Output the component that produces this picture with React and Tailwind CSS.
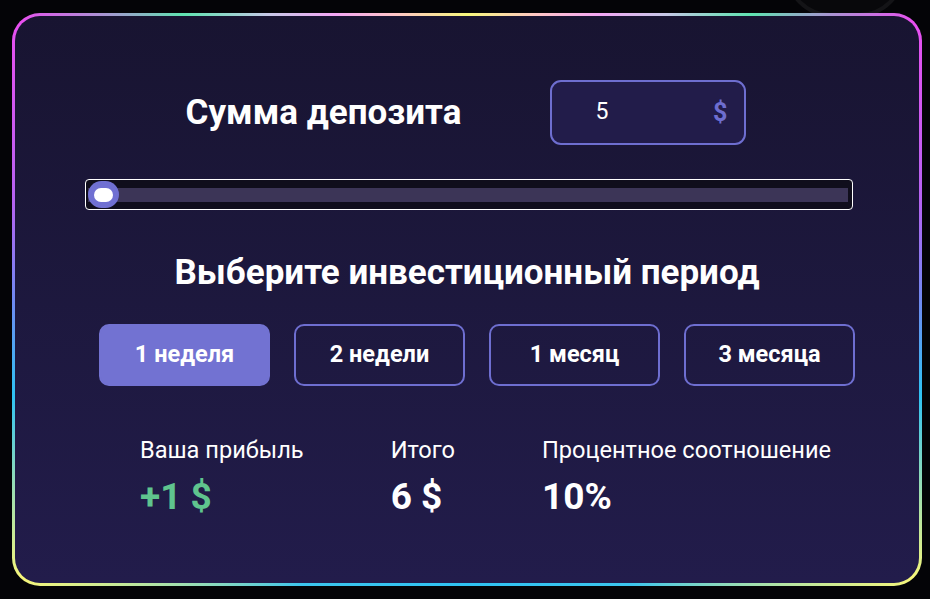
import { useState } from "react";

const PERIODS = ["1 неделя", "2 недели", "1 месяц", "3 месяца"];

const STATS = [
  { label: "Ваша прибыль", value: "+1 $", green: true },
  { label: "Итого", value: "6 $" },
  { label: "Процентное соотношение", value: "10%" },
];

export default function App() {
  const [period, setPeriod] = useState(0);

  return (
    <div className="relative h-[599px] w-[930px] overflow-hidden bg-[#040407] pl-[12px] pt-[13px] font-['Roboto',sans-serif] text-white">
      <div className="absolute right-[25px] top-[-75px] h-[92px] w-[120px] rounded-full border-[4px] border-[#141417] bg-[#08080b]" />
      <div className="relative w-[910px] h-[573px] rounded-[28px] p-[3px] bg-[conic-gradient(from_0deg,#f6f77c_0deg,#ffc6c6_14deg,#f3a6f4_25deg,#c6c8e6_35deg,#5fe3b0_45deg,#e94ff0_58deg,#b463f1_78deg,#7089f2_90deg,#2fc2f3_102deg,#f7f67a_122deg,#3cc5ee_150deg,#2fc2f3_180deg,#3cc5ee_210deg,#f7f67a_238deg,#2fc2f3_258deg,#7089f2_270deg,#b463f1_282deg,#e94ff0_302deg,#5fe3b0_315deg,#c6c8e6_325deg,#f3a6f4_335deg,#ffc6c6_346deg,#f6f77c_360deg)]">
        <div className="h-full w-full rounded-[25px] bg-gradient-to-b from-[#181431] to-[#221c4b] pt-[64px]">
          <div className="flex items-center justify-center gap-[89px] pr-[2px]">
            <h2 className="text-[35px] font-bold leading-none">Сумма депозита</h2>
            <div className="flex h-[65px] w-[196px] items-center justify-between rounded-[11px] border-2 border-[#6e6ed0] bg-[#221c4a] pl-[43px] pr-[17px]">
              <span className="text-[23px]">5</span>
              <span className="text-[25px] font-bold text-[#6e6ed0]">$</span>
            </div>
          </div>

          <div className="ml-[70px] mt-[34px] flex h-[31px] w-[768px] items-center rounded-[4px] border border-white bg-[#100e1c] pl-[2px] pr-[4px]">
            <div className="relative flex h-[14px] flex-1 items-center bg-[#3c3557]">
              <div className="absolute left-0 flex h-[27px] w-[31px] items-center justify-center rounded-full bg-[#7070d2]">
                <div className="h-[14px] w-[19px] rounded-full bg-white" />
              </div>
            </div>
          </div>

          <h2 className="mt-[43px] text-center text-[35px] font-bold leading-[40px]">
            Выберите инвестиционный период
          </h2>

          <div className="ml-[84px] mt-[31px] flex gap-[24px]">
            {PERIODS.map((p, i) => (
              <button
                key={p}
                type="button"
                onClick={() => setPeriod(i)}
                className={
                  i === period
                    ? "h-[62px] w-[171px] rounded-[10px] border-2 border-[#7272d2] bg-[#7272d2] text-[23.5px] font-bold"
                    : "h-[62px] w-[171px] rounded-[10px] border-2 border-[#6e6ed0] text-[23.5px] font-bold"
                }
              >
                {p}
              </button>
            ))}
          </div>

          <div className="ml-[125px] mt-[50px] flex gap-[87px]">
            {STATS.map((s) => (
              <div key={s.label} className="flex flex-col">
                <span className="text-[23.6px] leading-[28px]">{s.label}</span>
                <span
                  className={
                    s.green
                      ? "mt-[13px] text-[37px] font-bold leading-[40px] text-[#5fc48e]"
                      : "mt-[13px] text-[37px] font-bold leading-[40px]"
                  }
                >
                  {s.value}
                </span>
              </div>
            ))}
          </div>
        </div>
      </div>
    </div>
  );
}
